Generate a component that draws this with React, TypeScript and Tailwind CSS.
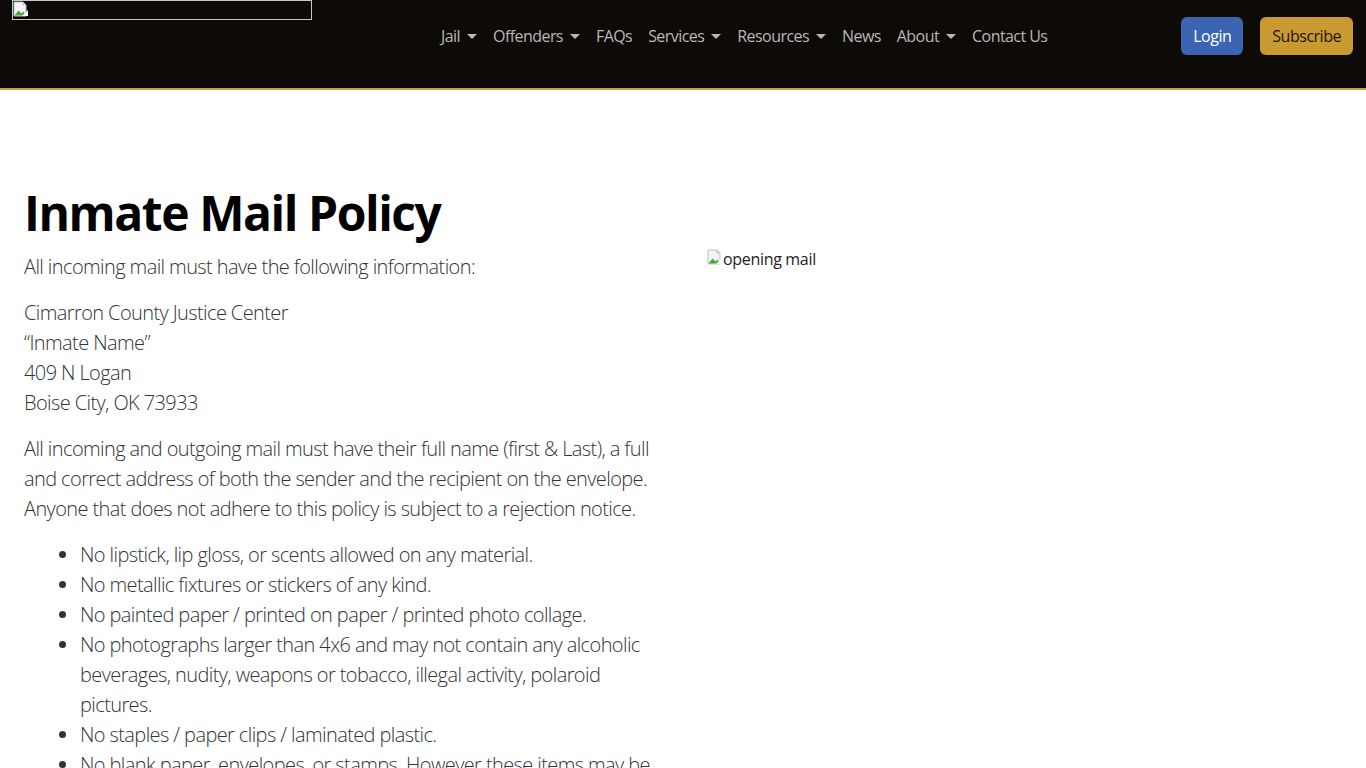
import { type FC } from 'react';

const navItems: { label: string; caret?: boolean }[] = [
  { label: 'Jail', caret: true },
  { label: 'Offenders', caret: true },
  { label: 'FAQs' },
  { label: 'Services', caret: true },
  { label: 'Resources', caret: true },
  { label: 'News' },
  { label: 'About', caret: true },
  { label: 'Contact Us' },
];

const rules = [
  'No lipstick, lip gloss, or scents allowed on any material.',
  'No metallic fixtures or stickers of any kind.',
  'No painted paper / printed on paper / printed photo collage.',
  'No photographs larger than 4x6 and may not contain any alcoholic beverages, nudity, weapons or tobacco, illegal activity, polaroid pictures.',
  'No staples / paper clips / laminated plastic.',
  'No blank paper, envelopes, or stamps. However these items may be purchased through the commissary.',
];

const BrokenImg: FC = () => (
  <svg width="16" height="16" viewBox="0 0 16 16" className="shrink-0">
    <path d="M1 1h9l3 3v11H1z" fill="#f2f4f8" stroke="#b9c1cc" />
    <path d="M10 1v3h3" fill="none" stroke="#b9c1cc" />
    <path d="M1.5 14.5l4-5 3 3 2-2 2.5 4z" fill="#4ca53a" />
    <path d="M9 15l6-6v6z" fill="#fff" />
  </svg>
);

const Caret: FC = () => (
  <span className="ml-[7px] inline-block h-0 w-0 border-x-[5px] border-t-[5px] border-x-transparent border-t-current align-middle" />
);

const App: FC = () => {
  return (
    <div className="min-h-screen bg-white" style={{ fontFamily: '"Open Sans", "Noto Sans", sans-serif' }}>
      {/* Header */}
      <header className="h-[90px] border-b-2 border-[#c9a13f] bg-[#0d0a07]">
        <div className="flex h-[72px] items-start">
          <div className="ml-3 flex h-[20px] w-[300px] items-start border border-[#c8c8c8]">
            <BrokenImg />
          </div>
          <nav className="ml-[121px] mt-[24px] flex items-center text-[16px] tracking-[-0.035em] text-[#b8b8b8]">
            {navItems.map((item) => (
              <a key={item.label} className="flex items-center px-2 leading-6">
                {item.label}
                {item.caret && <Caret />}
              </a>
            ))}
          </nav>
          <div className="ml-auto mr-[13px] mt-[17px] flex items-center gap-[17px] tracking-[-0.03em]">
            <button className="h-[38px] rounded-md bg-[#3b65b2] px-3 text-[16px] text-white">Login</button>
            <button className="h-[38px] rounded-md bg-[#c99a31] px-3 text-[16px] text-[#1b1408]">Subscribe</button>
          </div>
        </div>
      </header>

      {/* Content */}
      <main className="grid grid-cols-2 gap-12 px-6 pt-[94px] text-[20px] font-light leading-[30px] tracking-[-0.03em] text-[#333]">
        <div>
          <h1 className="mb-[10px] text-[48px] font-bold leading-[58px] tracking-[-0.03em] text-black">
            Inmate Mail Policy
          </h1>
          <p className="mb-4">All incoming mail must have the following information:</p>
          <p className="mb-4">
            Cimarron County Justice Center
            <br />
            “Inmate Name”
            <br />
            409 N Logan
            <br />
            Boise City, OK 73933
          </p>
          <p className="mb-4">
            All incoming and outgoing mail must have their full name (first &amp; Last), a full and correct address of
            both the sender and the recipient on the envelope. Anyone that does not adhere to this policy is subject to a
            rejection notice.
          </p>
          <ul className="list-disc pl-14">
            {rules.map((r) => (
              <li key={r}>{r}</li>
            ))}
          </ul>
        </div>
        <div className="pt-[65px]">
          <div className="flex items-start text-[16px] font-normal leading-[20px] tracking-[-0.02em] text-[#222]">
            <BrokenImg />
            <span>opening mail</span>
          </div>
        </div>
      </main>
    </div>
  );
};

export default App;
